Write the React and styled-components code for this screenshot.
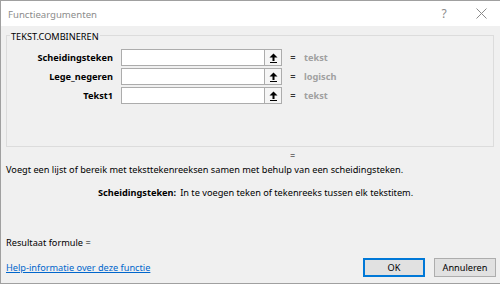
import React from "react";
import styled, { createGlobalStyle } from "styled-components";

const Global = createGlobalStyle`
  html, body {
    margin: 0;
    padding: 0;
    background: #ffffff;
  }
  body {
    font-family: "Noto Sans", "Segoe UI", sans-serif;
    font-size: 9.2px;
    color: #000000;
  }
`;

const args = [
  { name: "Scheidingsteken", type: "tekst" },
  { name: "Lege_negeren", type: "logisch" },
  { name: "Tekst1", type: "tekst" },
];

function UploadArrow() {
  return (
    <svg width="9" height="10" viewBox="0 0 9 10">
      <path d="M4.5 0.5 L8.5 4.5 L5.5 4.5 L5.5 8 L3.5 8 L3.5 4.5 L0.5 4.5 Z" fill="#000" />
      <rect x="1" y="9" width="7" height="1" fill="#000" />
    </svg>
  );
}

function App() {
  return (
    <>
      <Global />
      <Window>
        <TitleBar>
          <Title>Functieargumenten</Title>
          <TitleButtons>
            <TitleButton>?</TitleButton>
            <TitleButton>
              <svg width="11" height="11" viewBox="0 0 11 11">
                <path d="M0.5 0.5 L10.5 10.5 M10.5 0.5 L0.5 10.5" stroke="#8a8a8a" strokeWidth="1" />
              </svg>
            </TitleButton>
          </TitleButtons>
        </TitleBar>
        <Body>
          <GroupBox>
            <Legend>TEKST.COMBINEREN</Legend>
            {args.map((arg) => (
              <ArgRow key={arg.name}>
                <ArgLabel>{arg.name}</ArgLabel>
                <ArgInput />
                <RefButton>
                  <UploadArrow />
                </RefButton>
                <Equals>=</Equals>
                <ArgType>{arg.type}</ArgType>
              </ArgRow>
            ))}
          </GroupBox>
          <ResultEquals>=</ResultEquals>
          <Description>
            Voegt een lijst of bereik met teksttekenreeksen samen met behulp van een scheidingsteken.
          </Description>
          <ArgHelp>
            <strong>Scheidingsteken:</strong>
            <span>In te voegen teken of tekenreeks tussen elk tekstitem.</span>
          </ArgHelp>
          <Spacer />
          <Result>Resultaat formule =</Result>
          <Footer>
            <HelpLink href="#">Help-informatie over deze functie</HelpLink>
            <Buttons>
              <DialogButton primary>OK</DialogButton>
              <DialogButton>Annuleren</DialogButton>
            </Buttons>
          </Footer>
        </Body>
      </Window>
    </>
  );
}

export default App;

const Window = styled.div`
  width: 500px;
  height: 284px;
  box-sizing: border-box;
  border: 1px solid #a0a0a0;
  border-right: none;
  display: flex;
  flex-direction: column;
  background: #f0f0f0;
  overflow: hidden;
`;

const TitleBar = styled.div`
  height: 25px;
  background: #ffffff;
  display: flex;
  align-items: center;
  justify-content: space-between;
  padding-left: 7px;
`;

const Title = styled.div`
  color: #8c8c8c;
  font-size: 9.6px;
  margin-top: 1px;
`;

const TitleButtons = styled.div`
  display: flex;
  align-items: center;
`;

const TitleButton = styled.div`
  width: 38px;
  display: flex;
  justify-content: center;
  align-items: center;
  color: #8c8c8c;
  font-size: 12px;
  &:last-child {
    width: 37px;
    margin-right: 0px;
  }
`;

const Body = styled.div`
  flex: 1;
  display: flex;
  flex-direction: column;
  padding: 9px 4px 6px 5px;
`;

const GroupBox = styled.div`
  position: relative;
  height: 112px;
  border: 1px solid #dcdcdc;
  margin-right: 2px;
  padding-top: 13px;
  box-sizing: border-box;
  display: flex;
  flex-direction: column;
  gap: 2px;
`;

const Legend = styled.div`
  position: absolute;
  top: -5px;
  left: 3px;
  padding: 0 1px;
  background: #f0f0f0;
  line-height: 12px;
`;

const ArgRow = styled.div`
  display: flex;
  align-items: center;
  height: 17px;
`;

const ArgLabel = styled.div`
  width: 114px;
  text-align: right;
  font-weight: 700;
  padding-right: 8px;
  box-sizing: border-box;
  flex-shrink: 0;
`;

const ArgInput = styled.div`
  width: 143px;
  height: 17px;
  box-sizing: border-box;
  background: #ffffff;
  border: 1px solid #acacac;
  border-right: none;
`;

const RefButton = styled.div`
  width: 18px;
  height: 17px;
  box-sizing: border-box;
  border: 1px solid #acacac;
  background: #f5f5f5;
  display: flex;
  align-items: center;
  justify-content: center;
`;

const Equals = styled.div`
  width: 22px;
  text-align: center;
  font-weight: 700;
  color: #333333;
`;

const ArgType = styled.div`
  color: #a0a0a0;
  font-weight: 700;
`;

const ResultEquals = styled.div`
  margin: 2px 0 0 284px;
  line-height: 13px;
`;

const Description = styled.div`
  margin-top: 0px;
  line-height: 16px;
`;

const ArgHelp = styled.div`
  margin: 7px 0 0 92px;
  display: flex;
  gap: 4px;
  line-height: 16px;
  strong {
    font-weight: 700;
  }
`;

const Spacer = styled.div`
  flex: 1;
`;

const Result = styled.div`
  line-height: 16px;
  margin-bottom: 7px;
`;

const Footer = styled.div`
  display: flex;
  align-items: center;
  justify-content: space-between;
`;

const HelpLink = styled.a`
  color: #0066cc;
  text-decoration: underline;
`;

const Buttons = styled.div`
  display: flex;
  gap: 9px;
`;

const DialogButton = styled.button`
  width: 62px;
  height: 19px;
  box-sizing: border-box;
  font-family: inherit;
  font-size: 9.2px;
  padding: 0;
  background: #e1e1e1;
  color: #000;
  border: ${(props) => (props.primary ? "2px solid #0078d7" : "1px solid #adadad")};
`;
